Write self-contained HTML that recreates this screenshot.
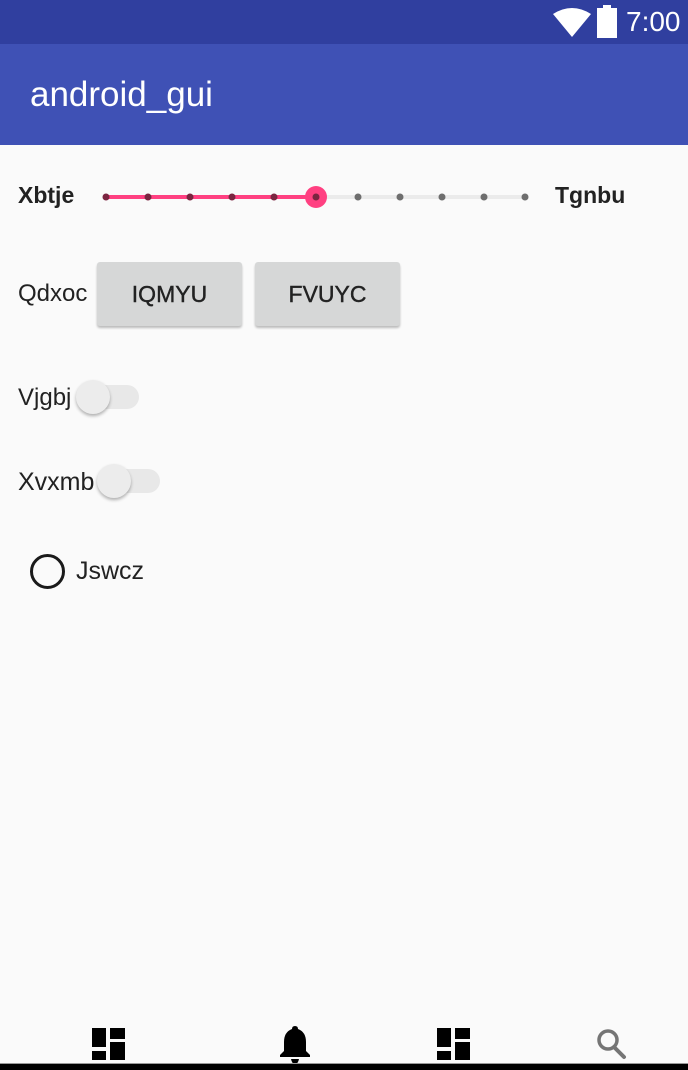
<!DOCTYPE html>
<html><head><style>
*{margin:0;padding:0;box-sizing:border-box}
body{width:688px;height:1070px;background:#fafafa;font-family:"Liberation Sans",sans-serif;position:relative;overflow:hidden;color:#212121}
.a{position:absolute}
.btn{position:absolute;top:262px;width:145px;height:64px;background:#d6d7d7;border-radius:3px;box-shadow:0 2px 2px rgba(0,0,0,.25);font-size:23px;text-align:center;line-height:64px;color:#222;-webkit-text-stroke:0.4px #222}
.lbl{position:absolute;font-size:24px;color:#222}
</style></head><body>
<div class="a" style="left:0;top:0;width:688px;height:44px;background:#303f9f"></div>
<div class="a" style="left:0;top:44px;width:688px;height:101px;background:#3f51b5"></div>
<div class="a" style="left:30px;top:75px;font-size:35px;color:#fff">android_gui</div>
<svg class="a" style="left:552px;top:8px" width="40" height="30"><path d="M1 6 Q20 -6 39 6 L20 29 Z" fill="#fff"/></svg>
<div class="a" style="left:597px;top:8px;width:20px;height:30px;background:#fff"></div>
<div class="a" style="left:603px;top:5px;width:8px;height:4px;background:#fff"></div>
<div class="a" style="left:626px;top:6px;font-size:28px;color:#fff">7:00</div>

<div class="lbl" style="left:18px;top:182px;font-weight:bold;font-size:23px">Xbtje</div>
<div class="lbl" style="left:555px;top:182px;font-weight:bold;font-size:23px">Tgnbu</div>
<svg class="a" style="left:0;top:180px" width="688" height="36">
<line x1="106" y1="17" x2="525" y2="17" stroke="#ebebeb" stroke-width="4"/>
<line x1="106" y1="17" x2="316" y2="17" stroke="#ff4081" stroke-width="4"/>
<g fill="#6e6e6e"><circle cx="358" cy="17" r="3.5"/><circle cx="400" cy="17" r="3.5"/><circle cx="442" cy="17" r="3.5"/><circle cx="484" cy="17" r="3.5"/><circle cx="525" cy="17" r="3.5"/></g>
<g fill="#7a2540"><circle cx="106" cy="17" r="3.5"/><circle cx="148" cy="17" r="3.5"/><circle cx="190" cy="17" r="3.5"/><circle cx="232" cy="17" r="3.5"/><circle cx="274" cy="17" r="3.5"/></g>
<circle cx="316" cy="17" r="11" fill="#ff4081"/><circle cx="316" cy="17" r="3.5" fill="#7a2540"/>
</svg>

<div class="lbl" style="left:18px;top:280px">Qdxoc</div>
<div class="btn" style="left:97px">IQMYU</div>
<div class="btn" style="left:255px">FVUYC</div>

<div class="lbl" style="left:18px;top:384px">Vjgbj</div>
<div class="a" style="left:90px;top:385px;width:49px;height:24px;border-radius:12px;background:#e8e8e8"></div>
<div class="a" style="left:76px;top:380px;width:34px;height:34px;border-radius:50%;background:#ececec;box-shadow:0 2px 3px rgba(0,0,0,.3)"></div>
<div class="lbl" style="left:18px;top:468px;font-size:25px">Xvxmb</div>
<div class="a" style="left:111px;top:469px;width:49px;height:24px;border-radius:12px;background:#e8e8e8"></div>
<div class="a" style="left:97px;top:464px;width:34px;height:34px;border-radius:50%;background:#ececec;box-shadow:0 2px 3px rgba(0,0,0,.3)"></div>

<div class="a" style="left:30px;top:554px;width:35px;height:35px;border-radius:50%;border:3.5px solid #1a1a1a"></div>
<div class="lbl" style="left:76px;top:557px;font-size:25px">Jswcz</div>

<svg class="a" style="left:0;top:1020px" width="688" height="50">
<g fill="#000"><rect x="92" y="8" width="14" height="19"/><rect x="110" y="8" width="15" height="11"/><rect x="92" y="31" width="14" height="9"/><rect x="110" y="22" width="15" height="18"/>
<rect x="437" y="8" width="14" height="19"/><rect x="455" y="8" width="15" height="11"/><rect x="437" y="31" width="14" height="9"/><rect x="455" y="22" width="15" height="18"/>
<path d="M295 6 q3 0 3 3 q8 3 8 13 v9 l4 4 v2 h-30 v-2 l4 -4 v-9 q0 -10 8 -13 q0 -3 3 -3z"/><path d="M291 39 h8 q-1 5 -4 5 q-3 0 -4 -5z"/></g>
<circle cx="608" cy="20" r="9" fill="none" stroke="#757575" stroke-width="3.5"/><line x1="614" y1="27" x2="624" y2="37" stroke="#757575" stroke-width="4" stroke-linecap="round"/>
<rect x="0" y="44" width="688" height="6" fill="#000"/><rect x="0" y="43" width="688" height="1" fill="#999"/>
</svg>
</body></html>
